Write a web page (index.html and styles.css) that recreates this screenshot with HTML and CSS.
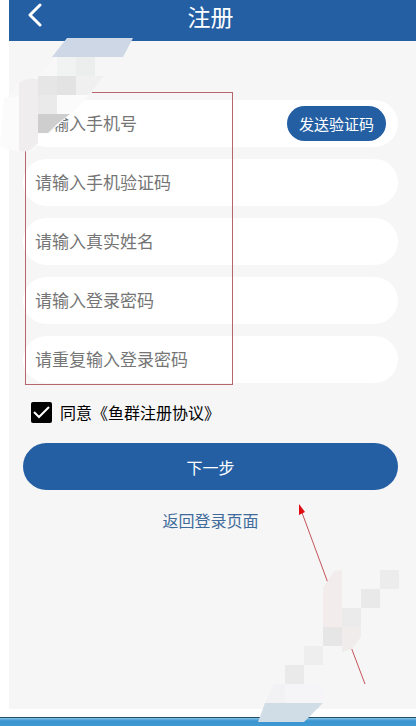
FILE: index.html
```html
<!DOCTYPE html>
<html lang="zh-CN">
  <head>
    <meta charset="UTF-8" />
    <meta name="viewport" content="width=device-width, initial-scale=1.0" />
    <title>注册</title>
    <link rel="stylesheet" href="styles.css">
  </head>
  <body>
    <div class="screen">
      <header class="top-bar">
        <button type="button" class="back-btn" aria-label="返回">
          <svg width="14" height="24" viewBox="0 0 14 24">
            <path d="M12 2 L2 12 L12 22" fill="none" stroke="#fff" stroke-width="3" stroke-linecap="round" stroke-linejoin="round" />
          </svg>
        </button>
        <h1>注册</h1>
      </header>

      <form class="register-form">
        <div class="field">
          <input type="tel" placeholder="请输入手机号" aria-label="手机号" />
          <button type="button" class="code-btn">发送验证码</button>
        </div>
        <div class="field">
          <input type="text" placeholder="请输入手机验证码" aria-label="手机验证码" />
        </div>
        <div class="field">
          <input type="text" placeholder="请输入真实姓名" aria-label="真实姓名" />
        </div>
        <div class="field">
          <input type="password" placeholder="请输入登录密码" aria-label="登录密码" />
        </div>
        <div class="field">
          <input type="password" placeholder="请重复输入登录密码" aria-label="重复登录密码" />
        </div>

        <label class="agree">
          <input type="checkbox" checked />
          <span>同意《鱼群注册协议》</span>
        </label>

        <button type="button" class="next-btn">下一步</button>
        <a href="#" class="login-link">返回登录页面</a>
      </form>
    </div>
    <div class="bottom-bar"></div>

    <!-- red frame round the inputs -->
    <div class="mark-box"></div>

    <!-- blocks over the back corner -->
    <svg class="overlay overlay-top" width="140" height="160" viewBox="0 0 140 160">
      <path d="M56 57 H95 V76 H104 L90 95 L70 114 L50 133 H38 L36 151 H19 L4 148 L8 97 L19 82 L38 76 Z" fill="#f8f8f8" />
      <path d="M4 97 H19 V152 L0 146 Z" fill="#fcfbfb" />
      <path d="M38 133 L50 131 L50 134 H38 Z" fill="#fdfdfd" />
      <path d="M19 83 Q27 77 38 79 V143 L30 150 Q24 153 19 150 Z" fill="#efedee" />
      <path d="M57 57 H76 V76 H57 Z" fill="#f1f3f3" />
      <path d="M76 57 H95 V76 H76 Z" fill="#eceeee" />
      <path d="M38 76 H57 V95 H38 Z" fill="#e6e6e6" />
      <path d="M57 76 H76 V95 H57 Z" fill="#e3e3e3" />
      <path d="M76 76 H104 L89 95 H76 Z" fill="#f0f0f0" />
      <path d="M38 95 H57 V114 H38 Z" fill="#ebeaeb" />
      <path d="M57 95 H89 L70 114 H57 Z" fill="#fbfbfb" />
      <path d="M38 114 H70 L57 124 L48 133 H38 Z" fill="#cfcece" />
      <path d="M67 38 H133 L123 57 H52 Z" fill="#cdd7e6" />
    </svg>

    <!-- arrow to the next button, and the blocks across it -->
    <svg class="overlay overlay-arrow" width="158" height="222" viewBox="258 500 158 222">
      <path d="M301 510 L328 583 M351 647 L365 684" fill="none" stroke="#c4555c" stroke-width="1" />
      <path d="M299 504 L305 512 L299 515 Z" fill="#e00b12" />
      <path d="M323 588 L334 571 L342 570 V627 H323 Z" fill="#f3ecec" />
      <path d="M342 608 H361 V637 L352 649 L342 652 Z" fill="#f1ecec" />
      <path d="M380 570 H399 V589 H380 Z" fill="#ececec" />
      <path d="M361 589 H380 V608 H361 Z" fill="#e9e9e9" />
      <path d="M342 608 H361 V627 H342 Z" fill="#ebebeb" />
      <path d="M323 627 H342 V646 H323 Z" fill="#e7e6e6" />
      <path d="M304 646 H323 V665 H304 Z" fill="#eeeeee" />
      <path d="M285 665 H304 V684 H285 Z" fill="#eaeaea" />
      <path d="M274 684 H285 V703 H265 Z" fill="#f2f2f5" />
      <path d="M285 684 H323 V703 H285 Z" fill="#f5f5f8" />
      <path d="M265 703 H323 L304 722 H258 Z" fill="#d0dde7" />
    </svg>
  </body>
</html>
```
FILE: styles.css
```css
* {
  box-sizing: border-box;
}
body {
  margin: 0;
  min-height: 100vh;
  display: flex;
  flex-direction: column;
  position: relative;
  background-color: #fff;
  font-family: "Noto Sans CJK SC", sans-serif;
}
button, input {
  font-family: inherit;
}
button {
  border: none;
  color: #fff;
  background-color: #245fa4;
  cursor: pointer;
}
.screen {
  flex: 1;
  margin: 0 0 8px 9px;
  background-color: #f6f6f6;
}
.top-bar {
  display: grid;
  grid-template-columns: 24px 1fr 24px;
  align-items: center;
  height: 41px;
  padding: 0 18px 9px 14px;
  background-color: #245fa4;
}
.back-btn {
  display: flex;
  padding: 0 0 2px 5px;
}
h1 {
  margin: 0;
  color: #fff;
  font-size: 23px;
  font-weight: 400;
  line-height: 32px;
  text-align: center;
}
.register-form {
  display: flex;
  flex-direction: column;
  gap: 12px;
  padding: 59px 18px 24px 14px;
}
.field {
  display: flex;
  align-items: center;
  height: 47px;
  padding: 0 12px;
  border-radius: 24px;
  background-color: #fff;
}
.field input {
  flex: 1;
  min-width: 0;
  padding: 0 0 2px;
  border: none;
  outline: none;
  background: none;
  font-size: 17px;
}
.field input::placeholder {
  color: #757575;
}
.code-btn {
  height: 35px;
  padding: 0 12px;
  border-radius: 18px;
  font-size: 15px;
}
.agree {
  display: flex;
  align-items: center;
  gap: 8px;
  height: 36px;
  padding: 0 0 2px 8px;
  color: #000;
  font-size: 16px;
}
.agree input {
  appearance: none;
  width: 21px;
  height: 21px;
  margin: 0;
  border-radius: 2px;
  background-color: #fff;
}
.agree input:checked {
  background: #000 url("data:image/svg+xml,%3Csvg xmlns='http://www.w3.org/2000/svg' viewBox='0 0 21 21'%3E%3Cpath d='M3 10 L8 15 L18 5' fill='none' stroke='white' stroke-width='2'/%3E%3C/svg%3E");
}
.next-btn {
  height: 47px;
  border-radius: 24px;
  font-size: 16px;
}
.login-link {
  align-self: center;
  margin-top: 6px;
  color: #3e6b9b;
  font-size: 16px;
  line-height: 24px;
  text-decoration: none;
}
.bottom-bar {
  height: 9px;
  border-top: 1px solid #244d68;
  background: linear-gradient(#83c3e6, #3a94d0 3px, #3f99d2);
}
.mark-box {
  position: absolute;
  top: 92px;
  left: 25px;
  width: 208px;
  height: 293px;
  border: 1px solid #b5656c;
  pointer-events: none;
}
.overlay {
  position: absolute;
  pointer-events: none;
}
.overlay-top {
  top: 0;
  left: 0;
}
.overlay-arrow {
  top: 500px;
  left: 258px;
}
```
